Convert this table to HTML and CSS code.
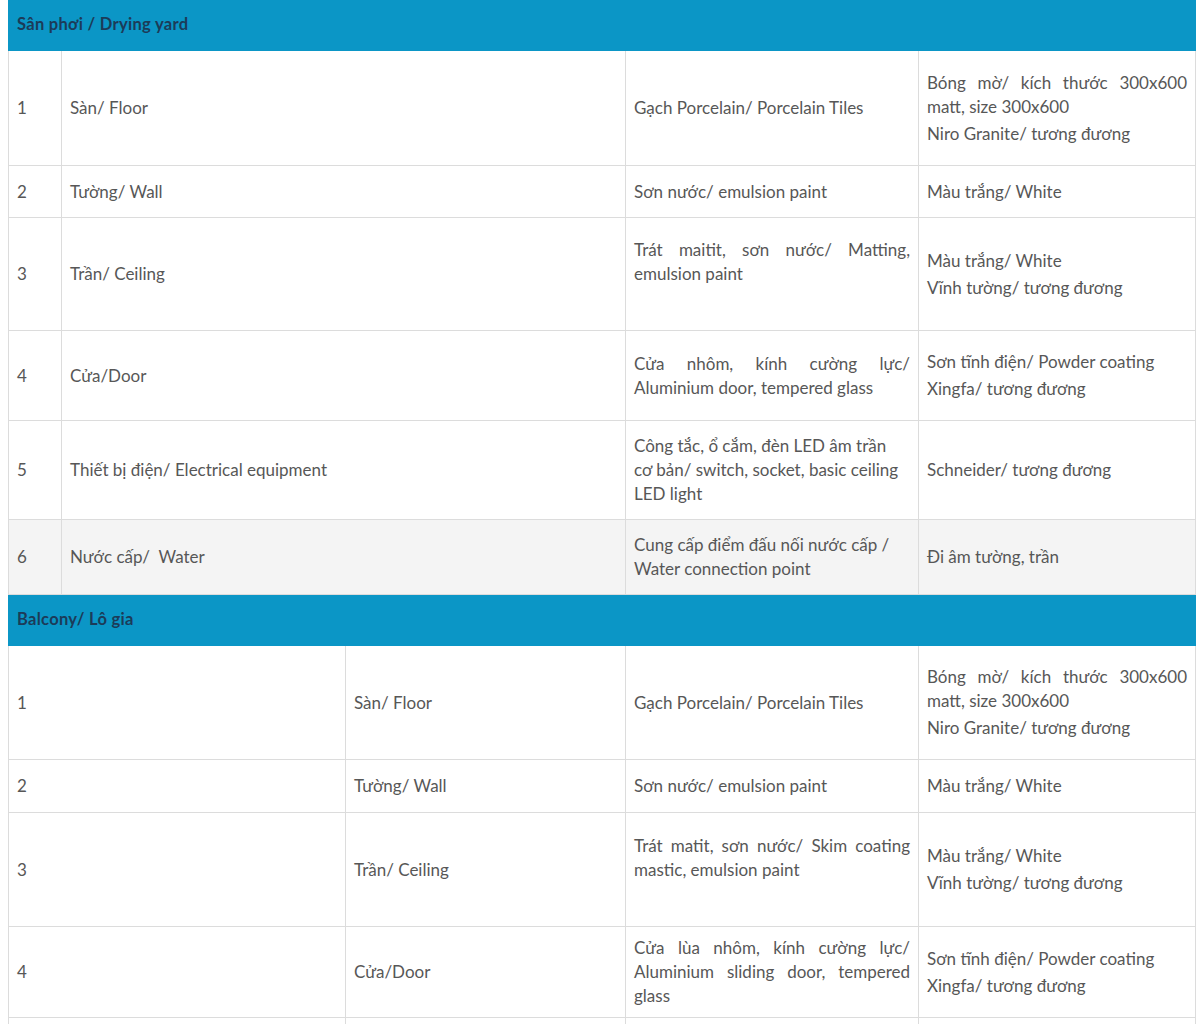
FILE: index.html
```html
<!DOCTYPE html>
<html lang="vi">
<head>
<meta charset="utf-8">
<title>Vật liệu hoàn thiện</title>
<link rel="stylesheet" href="styles.css">
</head>
<body>
<div class="page">
  <table class="spec">
    <colgroup>
      <col class="c-a1"><col class="c-a2"><col class="c-3"><col class="c-4">
    </colgroup>
    <tr class="head"><td colspan="4">Sân phơi / Drying yard</td></tr>
    <tr class="h115">
      <td>1</td><td>Sàn/ Floor</td><td>Gạch Porcelain/ Porcelain Tiles</td>
      <td><p>Bóng mờ/ kích thước 300x600 matt, size 300x600</p><p>Niro Granite/ tương đương</p></td>
    </tr>
    <tr class="h52">
      <td>2</td><td>Tường/ Wall</td><td>Sơn nước/ emulsion paint</td><td>Màu trắng/ White</td>
    </tr>
    <tr class="h113">
      <td>3</td><td>Trần/ Ceiling</td><td class="lift">Trát maitit, sơn nước/ Matting, emulsion paint</td>
      <td><p>Màu trắng/ White</p><p>Vĩnh tường/ tương đương</p></td>
    </tr>
    <tr class="h90">
      <td>4</td><td>Cửa/Door</td><td>Cửa nhôm, kính cường lực/ Aluminium door, tempered glass</td>
      <td><p>Sơn tĩnh điện/ Powder coating</p><p>Xingfa/ tương đương</p></td>
    </tr>
    <tr class="h99">
      <td>5</td><td>Thiết bị điện/ Electrical equipment</td><td class="left">Công tắc, ổ cắm, đèn LED âm trần<br>cơ bản/ switch, socket, basic ceiling LED light</td>
      <td>Schneider/ tương đương</td>
    </tr>
    <tr class="h75 shade">
      <td>6</td><td>Nước cấp/&nbsp; Water</td><td class="left">Cung cấp điểm đấu nối nước cấp / Water connection point</td>
      <td>Đi âm tường, trần</td>
    </tr>
  </table>

  <table class="spec">
    <colgroup>
      <col class="c-b1"><col class="c-b2"><col class="c-3"><col class="c-4">
    </colgroup>
    <tr class="head"><td colspan="4">Balcony/ Lô gia</td></tr>
    <tr class="h114">
      <td>1</td><td>Sàn/ Floor</td><td>Gạch Porcelain/ Porcelain Tiles</td>
      <td><p>Bóng mờ/ kích thước 300x600 matt, size 300x600</p><p>Niro Granite/ tương đương</p></td>
    </tr>
    <tr class="h53">
      <td>2</td><td>Tường/ Wall</td><td>Sơn nước/ emulsion paint</td><td>Màu trắng/ White</td>
    </tr>
    <tr class="h114">
      <td>3</td><td>Trần/ Ceiling</td><td class="lift">Trát matit, sơn nước/ Skim coating mastic, emulsion paint</td>
      <td><p>Màu trắng/ White</p><p>Vĩnh tường/ tương đương</p></td>
    </tr>
    <tr class="h91">
      <td>4</td><td>Cửa/Door</td><td>Cửa lùa nhôm, kính cường lực/ Aluminium sliding door, tempered glass</td>
      <td><p>Sơn tĩnh điện/ Powder coating</p><p>Xingfa/ tương đương</p></td>
    </tr>
    <tr class="h99">
      <td>5</td><td>Thiết bị điện/ Electrical equipment</td><td class="left">Công tắc, ổ cắm, đèn LED âm trần<br>cơ bản/ switch, socket, basic ceiling LED light</td>
      <td>Schneider/ tương đương</td>
    </tr>
  </table>
</div>
</body>
</html>
```

FILE: styles.css
```css
html, body {
  margin: 0;
  padding: 0;
  background: #ffffff;
}

.page {
  padding: 0 5px 0 8px;
  font-family: Lato, "Liberation Sans", sans-serif;
  font-size: 17px;
  color: #575757;
}

.spec {
  width: 1187px;
  border-collapse: collapse;
  table-layout: fixed;
}

.c-a1 { width: 53px; }
.c-a2 { width: 564px; }
.c-b1 { width: 337px; }
.c-b2 { width: 280px; }
.c-3 { width: 293px; }
.c-4 { width: 277px; }

.spec td {
  box-sizing: border-box;
  border: 1px solid #dcdcdc;
  padding: 0 8px;
  vertical-align: middle;
  line-height: 24px;
  text-align: justify;
}

.spec p {
  margin: 0;
}

.spec p + p {
  margin-top: 3px;
}

.spec .head td {
  height: 50px;
  padding-bottom: 3px;
  background: #0b96c6;
  border-color: #0b96c6;
  color: #1c3b58;
  font-weight: 700;
  font-size: 16.5px;
  letter-spacing: 0.3px;
}

.spec td.lift {
  padding-bottom: 24px;
}

.spec td.left {
  text-align: left;
}

.shade td {
  background: #f4f4f4;
}

.h52 td { height: 52px; }
.h53 td { height: 53px; }
.h75 td { height: 75px; }
.h90 td { height: 90px; }
.h91 td { height: 91px; }
.h99 td { height: 99px; }
.h113 td { height: 113px; }
.h114 td { height: 114px; }
.h115 td { height: 115px; }
```
